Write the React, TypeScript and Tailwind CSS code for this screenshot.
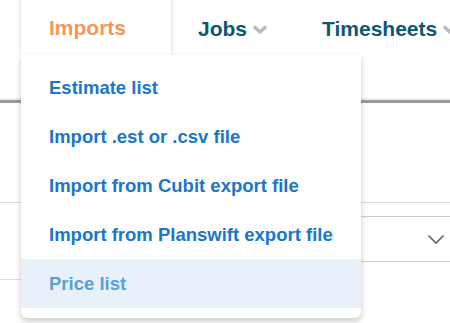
const menuItems = [
  'Estimate list',
  'Import .est or .csv file',
  'Import from Cubit export file',
  'Import from Planswift export file',
  'Price list',
]

function Chevron() {
  return (
    <svg width="14" height="10" viewBox="0 0 14 10" className="ml-[6px] mt-[2px]">
      <polyline
        points="2,2.5 7,7 12,2.5"
        fill="none"
        stroke="#bbbbbb"
        strokeWidth="3.6"
        strokeLinecap="round"
        strokeLinejoin="round"
      />
    </svg>
  )
}

export default function App() {
  return (
    <div className="relative h-[323px] w-[450px] overflow-hidden bg-white font-['Liberation_Sans',Arial,sans-serif]">
      <header className="flex h-[55px] items-end whitespace-nowrap pl-[21px] text-[21px] font-bold">
        <div className="flex h-[62px] w-[150px] shrink-0 items-center px-7 pt-[10px] pb-[2px] text-[#f7955a] shadow-[0_0_5px_rgba(0,0,0,0.16)]">
          Imports
        </div>
        <div className="flex h-[50px] shrink-0 items-center pb-[2px] pl-[27px] text-[#0d5675]">
          Jobs
          <Chevron />
        </div>
        <div className="flex h-[50px] shrink-0 items-center pb-[2px] pl-[55px] text-[#0d5675]">
          Timesheets
          <Chevron />
        </div>
      </header>

      <div className="mt-[43px] h-[2px] bg-[#eeeeee]" />
      <div className="h-[3px] bg-[#999999]" />

      <div className="mt-[99px] border-t border-[#dddddd]" />
      <div className="ml-[200px] mr-[-10px] mt-[13px] flex h-[46px] items-center justify-end border-y border-[#cccccc] pr-[15px]">
        <svg width="18" height="11" viewBox="0 0 18 11">
          <polyline points="1.5,1.5 9,9 16.5,1.5" fill="none" stroke="#666666" strokeWidth="1.6" />
        </svg>
      </div>
      <div className="mt-[17px] w-[300px] border-t border-[#dddddd]" />

      <nav className="absolute left-[21px] top-[55px] z-20 w-[340px] rounded-b-md bg-white pb-[10px] pt-2 shadow-[0_3px_6px_rgba(0,0,0,0.22)]">
        {menuItems.map((label, i) => {
          const active = i === menuItems.length - 1
          return (
            <div
              key={label}
              className={
                active
                  ? 'flex h-[49px] items-center bg-[#e8f1f9] px-7 text-[18.5px] font-bold text-[#5a9fdc]'
                  : 'flex h-[49px] items-center px-7 text-[18.5px] font-bold text-[#1a76c9]'
              }
            >
              {label}
            </div>
          )
        })}
      </nav>
    </div>
  )
}
